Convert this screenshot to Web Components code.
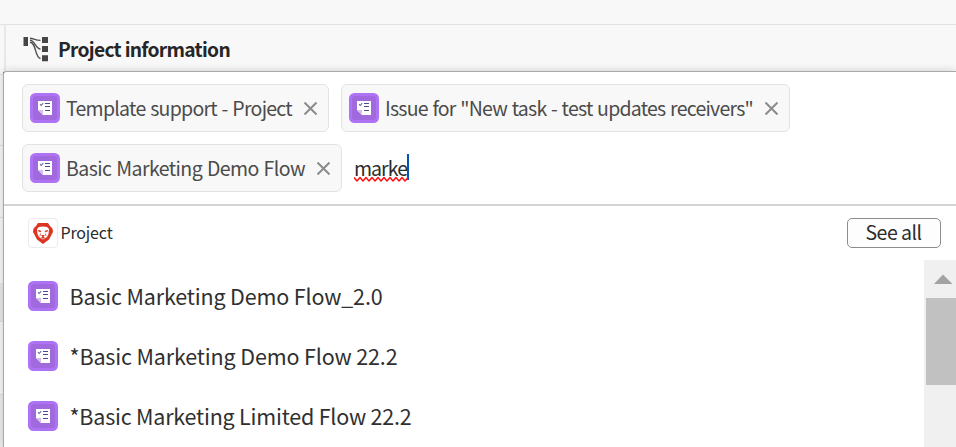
<!DOCTYPE html>
<html lang="en">
<head>
<meta charset="utf-8">
<title>Project information</title>
<style>
html,body{margin:0;height:100%;overflow:hidden;background:#f8f8f8;font-family:"Noto Sans CJK SC","Noto Sans",sans-serif}
</style>
</head>
<body>
<project-page></project-page>
<script>
const define = (name, html, setup) => customElements.define(name, class extends HTMLElement {
  connectedCallback() {
    if (this.shadowRoot) return;
    this.attachShadow({mode: 'open'}).innerHTML = html;
    if (setup) setup(this, this.shadowRoot);
  }
});

// A one-line label whose tracking is tuned so that it fills the given width.
define('fit-label', `<style>:host{display:block;white-space:pre;flex:none}span{display:inline-block}</style><span><slot></slot></span>`, (el, root) => {
  const target = +el.getAttribute('width');
  const span = root.querySelector('span');
  el.style.width = target + 'px';
  span.style.letterSpacing = (target - span.getBoundingClientRect().width) / el.textContent.length + 'px';
});

define('doc-icon', `<style>:host{display:block;width:30px;height:30px;flex:none}svg{display:block}</style>
<svg width="30" height="30" viewBox="0 0 30 30">
<rect width="30" height="30" rx="5.5" fill="#ae72f5"/><rect x="3" y="3" width="24" height="24" rx="3" fill="#a069de"/>
<path d="M8 8H22V22H13L8 17Z" fill="#fff"/><path d="M8 17H13V22Z" fill="#d5bfe6"/>
<path d="M10 11.2L11.2 12.5L13.2 10.2" fill="none" stroke="#6a68a8" stroke-width="1.1"/>
<path d="M15 10.500H20M15 13.500H20M15 17.500H20" stroke="#4c4a90" stroke-width="1"/></svg>`);

define('flow-icon', `<style>:host{display:block;width:26px;height:26px;flex:none}svg{display:block}</style>
<svg width="26" height="26" viewBox="0 0 26 26"><path d="M.5 0H5V9H.5ZM19 0h6v6h-6ZM19 9h6v6h-6ZM19 18.200h6v6h-6Z" fill="#464646"/>
<g fill="none" stroke="#505050" stroke-width="1.400"><path d="M7 1.300C10.500 1.300 12 3.400 17.500 3.400"/><path d="M7 3.200C12 3.200 12.500 12 17.500 12"/><path d="M7 5.200C13.500 5.200 11.500 20.500 17.500 21.500"/></g></svg>`);

define('lion-logo', `<style>:host{display:block;box-sizing:border-box;width:30px;height:30px;flex:none;border:1px solid #ebebeb;border-radius:4px;background:#fff}svg{display:block}</style>
<svg width="28" height="28" viewBox="1 1 28 28"><path d="M10 5H20L22 8L24.5 10.5L25 14L21 21.5L15 26L9 21.5L5 14L5.500 10.500L8 8Z" fill="#dc3523"/>
<path d="M11 9L15 8.500L19 9L21 11L20.500 16L19 19L17.500 20L15 21.500L12.500 20L11 19L9.500 16L9 11Z" fill="#fff"/>
<path d="M10 11.700L13.500 13L12.500 14.300L10.500 13.500ZM20 11.700L16.500 13L17.500 14.300L19.500 13.500ZM13 17H17L15.600 18.600L17 20L15 20.800L13 20L14.400 18.600ZM12.200 14.800L12.800 17L11.500 18.500ZM17.800 14.800L17.200 17L18.500 18.500Z" fill="#dc3523"/></svg>`);

define('tag-chip', `<style>:host{display:flex;align-items:center;box-sizing:border-box;height:48px;padding:0 11px 0 7px;border:1px solid #e3e3e3;border-radius:6px;background:#f8f8f8;color:#4b4b4b;font-size:19.5px;line-height:28px;word-spacing:1px}
.t{margin:0 11.500px 0 6px}svg{display:block;flex:none;margin-right:.5px}</style>
<doc-icon></doc-icon><div class="t"><slot></slot></div><svg width="13" height="13" viewBox="0 0 13 13"><path d="M.5.5L12.500 12.500M12.500.5L.5 12.500" stroke="#8b8b8b" stroke-width="2"/></svg>`);

define('result-row', `<style>:host{display:flex;align-items:center;height:30px;margin-bottom:30px;gap:11.5px;font-size:21.5px;line-height:30px;color:#303030}</style><doc-icon></doc-icon><slot></slot>`);

define('scroll-track', `<style>:host{display:block;box-sizing:border-box;width:32px;padding:14px 0 0 2px;background:#f0f0f0}svg{display:block;margin-left:8px}.thumb{height:87px;margin-top:14px;background:#c1c1c1}</style>
<svg width="20" height="10" viewBox="0 0 20 10"><path d="M0 10L9 0.5L18.500 10Z" fill="#a3a3a3"/></svg><div class="thumb"></div>`);

define('side-rail', `<style>:host{display:flex;flex-direction:column;width:3px;flex:none;background:#f7f7f7}
div{box-sizing:border-box;border-bottom:1px solid #dedede;flex:none}</style>
<div style="height:4px"></div><div style="height:71px"></div><div style="height:72px"></div><div style="height:65px;border:0"></div><div style="height:39px;background:#e8e8e8"></div><div style="height:73px"></div><div style="height:52px;background:#ededed;border:0"></div>`);

define('search-panel', `<style>
:host{display:flex;flex-direction:column;flex:1;min-width:0;box-sizing:border-box;border-left:1px solid #a9a9a9;border-top:1px solid #a9a9a9;border-top-left-radius:3px;background:#fff;box-shadow:0 0 9px rgba(0,0,0,.18)}
.field{box-sizing:border-box;height:134px;padding:12px 0 0 18px;border-bottom:2px solid #d4d4d4;display:flex;flex-direction:column;gap:12px}
.line{display:flex;gap:12px}
.typed{display:flex;align-items:center;color:#2c2c2c;font-size:19.5px;line-height:28px}
.word{position:relative;margin-top:-1px}.word svg{position:absolute;left:0;top:22px}
.caret{width:2px;height:26px;background:#0054b6;margin-top:-2px}
.group{display:flex;align-items:center;height:54px;padding:0 15px 0 24px;color:#2c2c2c;font-size:16px;line-height:24px}
.group > fit-label{margin:-2px 0 0 2.500px}
button{all:unset;display:flex;align-items:center;justify-content:center;box-sizing:border-box;margin-left:auto;width:94px;height:30px;border:1px solid #8c8c8c;border-radius:5px;background:#fdfdfd;font-size:19.5px;line-height:26px}
button fit-label{margin:-2px 1px 0 0}
.body{display:flex;flex:1;min-height:0;overflow:hidden}
.list{flex:1;padding:21px 0 0 24px}
</style>
<div class="field"><div class="line"><tag-chip><fit-label width="226">Template support - Project</fit-label></tag-chip><tag-chip><fit-label width="368">Issue for "New task - test updates receivers"</fit-label></tag-chip></div>
<div class="line"><tag-chip><fit-label width="239">Basic Marketing Demo Flow</fit-label></tag-chip><div class="typed"><div class="word"><fit-label width="53">marke</fit-label><svg width="54" height="7" viewBox="0 0 54 7"><path d="M0 1.500L3 5L6 1.500L9 5L12 1.500L15 5L18 1.500L21 5L24 1.500L27 5L30 1.500L33 5L36 1.500L39 5L42 1.500L45 5L48 1.500L51 5L54 1.500" fill="none" stroke="#f11" stroke-width="1.500" stroke-linejoin="round"/></svg></div><div class="caret"></div></div></div></div>
<div class="group"><lion-logo></lion-logo><fit-label width="52">Project</fit-label><button><fit-label width="56">See all</fit-label></button></div>
<div class="body"><div class="list"><result-row><fit-label width="313">Basic Marketing Demo Flow_2.0</fit-label></result-row><result-row><fit-label width="328">*Basic Marketing Demo Flow 22.2</fit-label></result-row><result-row><fit-label width="342">*Basic Marketing Limited Flow 22.2</fit-label></result-row></div><scroll-track></scroll-track></div>`);

define('project-page', `<style>
:host{display:flex;flex-direction:column;width:956px;height:447px;overflow:hidden;background:#f8f8f8}
.top{height:24px;flex:none;border-bottom:1px solid #e3e3e3}
header{display:flex;align-items:center;box-sizing:border-box;height:46px;flex:none;margin-left:4px;padding:1px 0 0 18px;border-left:2px solid #e8e8e8;color:#262626;font-size:19.2px;font-weight:700;line-height:28px}
header flow-icon{margin:3px 9px 0 -1px}
main{display:flex;flex:1;min-height:0}
.corner{width:2px;height:2px;background:#0054b6;margin:1px -2px 0 0;flex:none}
</style><div class="top"></div><header><flow-icon></flow-icon><fit-label width="172">Project information</fit-label></header><main><side-rail></side-rail><div class="corner"></div><search-panel></search-panel></main>`);
</script>
</body>
</html>
